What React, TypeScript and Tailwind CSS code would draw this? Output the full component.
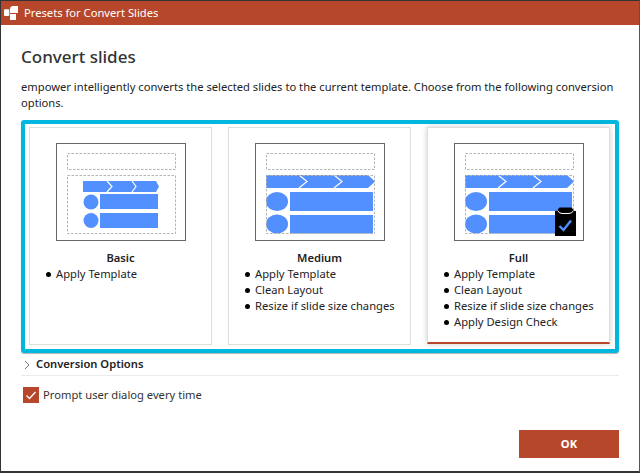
import React from "react";

const BLUE = "#528fff";

function Thumb({ variant }: { variant: "basic" | "medium" | "full" }) {
  const dash = { fill: "none", stroke: "#b4b4b4", strokeWidth: 1, strokeDasharray: "2.5 1.5" };
  return (
    <svg width="130" height="98" viewBox="0 0 130 98" className="block">
      <rect x="0.5" y="0.5" width="129" height="97" fill="#fff" stroke="#666" />
      <rect x="11.5" y="10.5" width="108" height="16" {...dash} />
      {variant === "basic" ? (
        <g>
          <path d="M27 38H100L103 43.5L100 49H27Z" fill={BLUE} />
          <path d="M51 38L56 43.5L51 49M76 38L80 43.5L76 49" fill="none" stroke="#fff" strokeWidth="1.2" />
          <circle cx="35" cy="59" r="7.5" fill={BLUE} />
          <circle cx="35" cy="77.5" r="7.5" fill={BLUE} />
          <rect x="44" y="51" width="58" height="15" fill={BLUE} />
          <rect x="44" y="70" width="58" height="15" fill={BLUE} />
        </g>
      ) : (
        <g>
          <path d="M11 32H113L120 38.5L113 45H11Z" fill={BLUE} />
          <path d="M44 32L52 38.5L44 45M79 32L87 38.5L79 45" fill="none" stroke="#fff" strokeWidth="1.2" />
          <ellipse cx="22" cy="58.5" rx="11" ry="9.5" fill={BLUE} />
          <ellipse cx="22" cy="81" rx="11" ry="9.5" fill={BLUE} />
          <rect x="35" y="49" width="83" height="19" fill={BLUE} />
          <rect x="35" y="72" width="83" height="18.5" fill={BLUE} />
        </g>
      )}
      <rect x="11.5" y="32.5" width="108" height="58" {...dash} />
      {variant === "full" && (
        <g>
          <path d="M101 68H102.5L105.5 64.5H117.5L120.5 68H122V93H101Z" fill="#000" />
          <path d="M103.5 67.5Q105 70.5 108 70.5H115Q118 70.5 119.5 67.5" fill="none" stroke="#fff" strokeWidth="1" />
          <path d="M105.5 83L109.5 87L117 77.5" fill="none" stroke={BLUE} strokeWidth="2.4" />
        </g>
      )}
    </svg>
  );
}

function Card({
  variant,
  title,
  items,
  selected,
}: {
  variant: "basic" | "medium" | "full";
  title: string;
  items: string[];
  selected?: boolean;
}) {
  return (
    <div
      className={
        "w-[183px] bg-white border border-[#dedede] flex flex-col items-center pt-[15px] " +
        (selected ? "h-[217px] shadow-[0_0_6px_rgba(0,0,0,0.2)] border-b-2 border-b-[#b7472a]" : "h-[218px]")
      }
    >
      <Thumb variant={variant} />
      <div className="mt-[9px] text-[11.2px] leading-[16px] font-semibold text-[#222]">{title}</div>
      <ul className="self-start pl-[16px] text-[11.2px] leading-[16px] text-[#222]">
        {items.map((t) => (
          <li key={t} className="flex items-center whitespace-nowrap">
            <span className="w-[5px] h-[5px] rounded-full bg-black mr-[5px]" />
            {t}
          </li>
        ))}
      </ul>
    </div>
  );
}

export default function App() {
  return (
    <div
      className="w-[640px] h-[473px] bg-white border-l border-t border-r border-b-2 border-[#333] border-r-[#555] flex flex-col text-[#222] overflow-hidden"
      style={{ fontFamily: '"Noto Sans", "Open Sans", sans-serif' }}
    >
      <div className="h-[24px] shrink-0 bg-[#b7472a] flex items-center pl-[3px] text-white">
        <svg width="16" height="16" viewBox="0 0 16 16" className="mr-[4px]">
          <rect x="0" y="4.3" width="5.3" height="6.7" rx="1" fill="#fff" />
          <path d="M9 1H14V8H6V4C6 2.3 7.3 1 9 1Z" fill="#fff" />
          <rect x="6" y="9" width="6" height="6" fill="#fff" />
        </svg>
        <span className="text-[11.2px] leading-none">Presets for Convert Slides</span>
      </div>

      <div className="flex-1 flex flex-col pl-[20px] pr-[20px]">
        <h1 className="mt-[20px] text-[17px] leading-[24px] font-medium text-[#333]">Convert slides</h1>
        <p className="mt-[10px] text-[11.2px] leading-[16px] text-[#222]">
          empower intelligently converts the selected slides to the current template. Choose from the following conversion options.
        </p>
        <div className="mt-[9px] h-[233px] border-[4px] border-[#00b7e0] rounded-[3px] flex items-start justify-between pt-[3px] pl-[4px] pr-[5px] shadow-[0_1px_1px_rgba(0,0,0,0.3)]">
          <Card variant="basic" title="Basic" items={["Apply Template"]} />
          <Card variant="medium" title="Medium" items={["Apply Template", "Clean Layout", "Resize if slide size changes"]} />
          <Card
            variant="full"
            title="Full"
            selected
            items={["Apply Template", "Clean Layout", "Resize if slide size changes", "Apply Design Check"]}
          />
        </div>
        <div className="mt-[3px] h-[17px] pb-[2px] border-b border-[#eaeaea] box-content flex items-center">
          <svg width="8" height="10" viewBox="0 0 8 10" className="ml-[2px] mr-[5px]">
            <path d="M2 1L6 5L2 9" fill="none" stroke="#777" strokeWidth="1" />
          </svg>
          <span className="text-[11.2px] font-semibold text-[#222]">Conversion Options</span>
        </div>
        <div className="mt-[11px] flex items-center">
          <span className="ml-[2px] w-[16px] h-[16px] bg-[#b7472a] flex items-center justify-center">
            <svg width="12" height="12" viewBox="0 0 12 12">
              <path d="M1.5 6.5L4.5 9.5L10.5 3" fill="none" stroke="#fff" strokeWidth="1.3" />
            </svg>
          </span>
          <span className="ml-[4px] text-[11.2px] leading-[16px] text-[#333]">Prompt user dialog every time</span>
        </div>
        <div className="mt-[27px] flex justify-end">
          <button className="w-[100px] h-[28px] bg-[#b7472a] text-white text-[11.2px] font-bold">OK</button>
        </div>
      </div>
    </div>
  );
}
